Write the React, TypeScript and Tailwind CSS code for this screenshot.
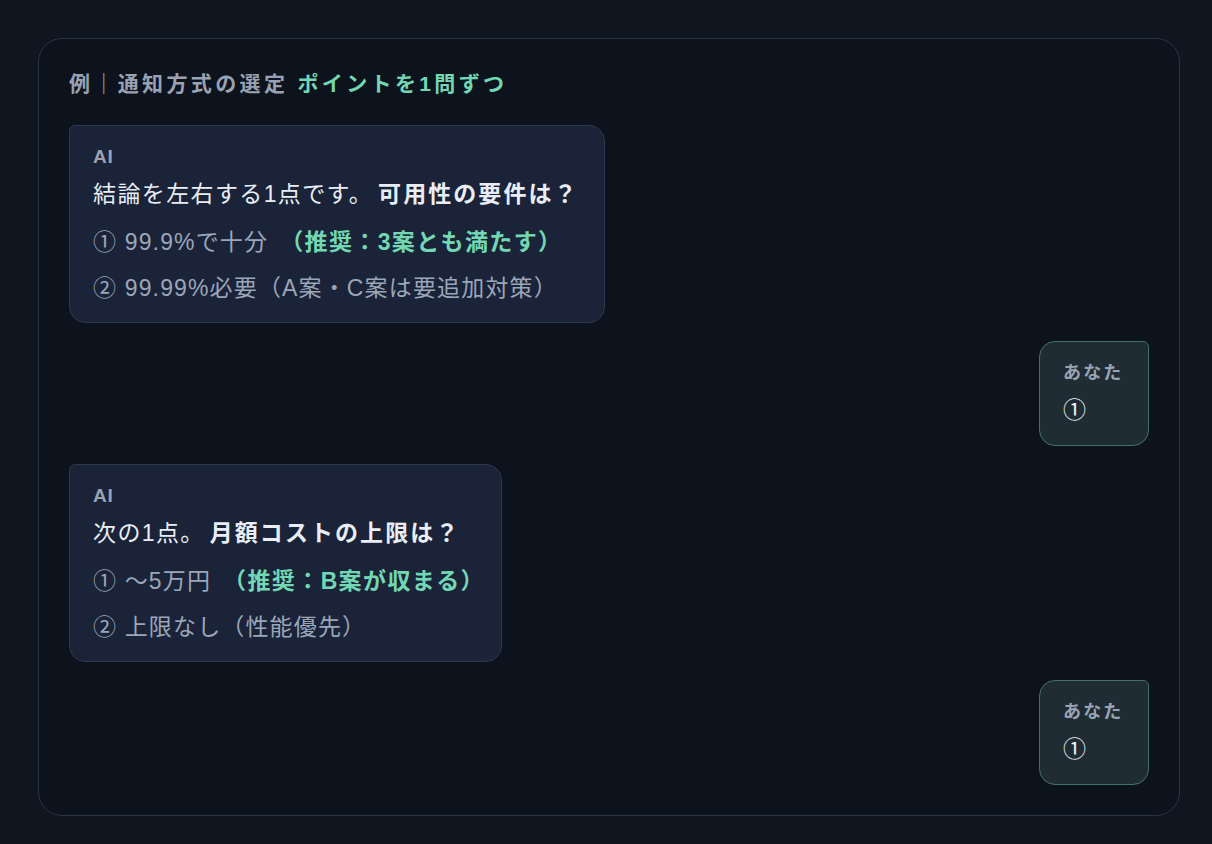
import React from 'react';

const font = { fontFamily: '"Liberation Sans", "Noto Sans CJK JP", sans-serif' };

type Option = { mark: string; text: string; note?: string };

const AiBubble = ({ width, lead, ask, options }: { width: string; lead: string; ask: string; options: Option[] }) => (
  <div className={`${width} rounded-2xl rounded-tl-md border border-[#2d384e] bg-[#1a2338] px-[23px] pt-[19px] pb-[19px]`}>
    <div className="text-[19px] leading-[24px] font-bold tracking-[0.04em] text-[#9aa3b4]">AI</div>
    <div className="mt-[9px] whitespace-nowrap text-[23px] leading-[32px] tracking-[0.06em] text-[#e9eef6]">
      {lead}
      <span className="ml-[5px] font-bold tracking-[0.09em]">{ask}</span>
    </div>
    {options.map((o, i) => (
      <div
        key={i}
        className={`${i === 0 ? 'mt-[17px]' : 'mt-[16px]'} whitespace-nowrap text-[23px] leading-[30px] tracking-[0.05em] text-[#9ba6b8]`}
      >
        {o.mark} {o.text}
        {o.note && <span className="ml-[12px] font-bold tracking-[0.06em] text-[#72d8b4]">{o.note}</span>}
      </div>
    ))}
  </div>
);

const UserBubble = ({ answer }: { answer: string }) => (
  <div className="flex justify-end">
    <div className="w-[110px] rounded-2xl rounded-tr-md border border-[#44706a] bg-[#1f2c33] px-[23px] pt-[19px] pb-[19px]">
      <div className="text-[18px] leading-[24px] font-bold tracking-[0.12em] text-[#9aa3b4]">あなた</div>
      <div className="mt-[9px] text-[23px] leading-[32px] text-[#eef2f7]">{answer}</div>
    </div>
  </div>
);

export default function App() {
  return (
    <div className="min-h-screen bg-[#101620] pt-[38px] pb-[28px]" style={font}>
      <div className="ml-[38px] w-[1142px] rounded-3xl border border-[#2a3447] bg-[#0d131c] p-[30px]">
        <div className="whitespace-nowrap text-[21px] leading-[30px] font-bold tracking-[0.16em] text-[#98a2b3]">
          例｜通知方式の選定 <span className="text-[#72d8b4]">ポイントを1問ずつ</span>
        </div>

        <div className="mt-[26px] flex flex-col gap-[18px]">
          <AiBubble
            width="w-[536px]"
            lead="結論を左右する1点です。"
            ask="可用性の要件は？"
            options={[
              { mark: '①', text: '99.9%で十分', note: '（推奨：3案とも満たす）' },
              { mark: '②', text: '99.99%必要（A案・C案は要追加対策）' },
            ]}
          />
          <UserBubble answer="①" />
          <AiBubble
            width="w-[433px]"
            lead="次の1点。"
            ask="月額コストの上限は？"
            options={[
              { mark: '①', text: '～5万円', note: '（推奨：B案が収まる）' },
              { mark: '②', text: '上限なし（性能優先）' },
            ]}
          />
          <UserBubble answer="①" />
        </div>
      </div>
    </div>
  );
}
